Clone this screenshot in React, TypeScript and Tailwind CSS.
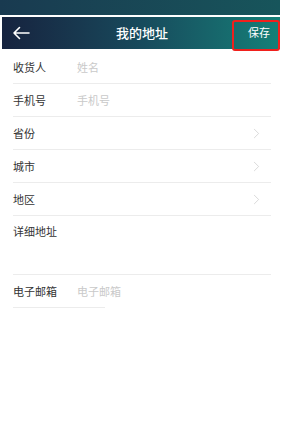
import { ChevronRight } from "lucide-react";

const font = { fontFamily: '"Noto Sans CJK SC", "Noto Sans", sans-serif' };

function Row({ label, placeholder, arrow }: { label: string; placeholder?: string; arrow?: boolean }) {
  return (
    <div className="flex h-[33px] items-center border-b border-[#ececec]">
      <span className="w-[64px] text-[11px] text-[#333]">{label}</span>
      {placeholder ? <span className="text-[11px] text-[#c9c9c9]">{placeholder}</span> : null}
      {arrow ? <ChevronRight className="ml-auto mr-[6px] text-[#c4c4c4]" size={17} strokeWidth={0.9} /> : null}
    </div>
  );
}

export default function App() {
  return (
    <div className="h-[425px] w-[282px] bg-white" style={font}>
      <div className="h-[15px] w-[280px] bg-gradient-to-r from-[#193a50] to-[#17555b]" />
      <div className="mx-[2px] mt-[2px] flex h-[32px] items-center bg-gradient-to-r from-[#16233f] via-[#174a5c] to-[#148078] px-[10px]">
        <svg width="18" height="14" viewBox="0 0 18 14" fill="none" stroke="white" strokeWidth="1.6" strokeLinecap="round" strokeLinejoin="round">
          <path d="M17 7H2M7.5 1.5L2 7l5.5 5.5" />
        </svg>
        <span className="flex-1 pl-[22px] text-center text-[13px] font-medium text-white">我的地址</span>
        <div className="mr-[-10px] flex h-[31px] w-[48px] translate-y-[2px] items-start justify-end rounded-[3px] border-2 border-[#f0201c] pr-[8px] pt-[2px]">
          <span className="text-[11px] text-white">保存</span>
        </div>
      </div>
      <div className="mt-[2px] pl-[13px] pr-[11px]">
        <Row label="收货人" placeholder="姓名" />
        <Row label="手机号" placeholder="手机号" />
        <Row label="省份" arrow />
        <Row label="城市" arrow />
        <Row label="地区" arrow />
        <div className="h-[59px] border-b border-[#ececec] pt-[7px] text-[11px] text-[#333]">详细地址</div>
      </div>
      <div className="ml-[13px] flex h-[33px] w-[92px] items-center border-b border-[#ececec] whitespace-nowrap">
        <span className="w-[64px] shrink-0 text-[11px] text-[#333]">电子邮箱</span>
        <span className="text-[11px] text-[#c9c9c9]">电子邮箱</span>
      </div>
    </div>
  );
}
